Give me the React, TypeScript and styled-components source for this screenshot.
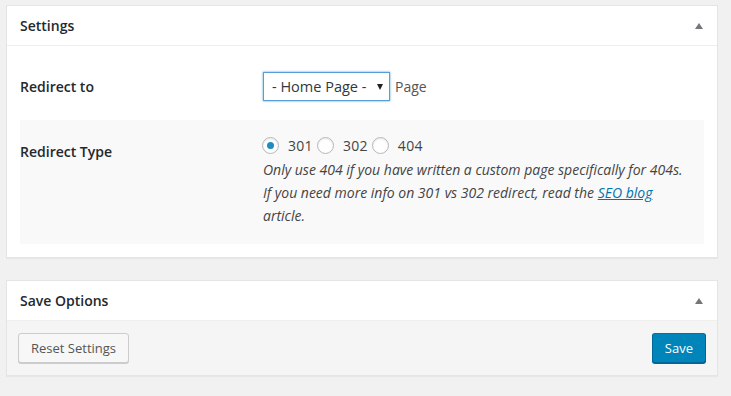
import React, { FC } from 'react';
import styled, { createGlobalStyle } from 'styled-components';

const GlobalStyle = createGlobalStyle`
  html, body {
    margin: 0;
    padding: 0;
    background: #f1f1f1;
  }
  body {
    font-family: "Open Sans", "Liberation Sans", sans-serif;
    color: #444;
    font-size: 14px;
  }
`;

const Page = styled.div`
  display: flex;
  flex-direction: column;
  gap: 22px;
  padding: 5px 13px 20px 6px;
  width: 712px;
`;

const Panel = styled.section`
  background: #fff;
  border: 1px solid #e5e5e5;
  box-shadow: 0 1px 1px rgba(0, 0, 0, 0.04);
`;

const PanelHeader = styled.header`
  display: flex;
  align-items: center;
  justify-content: space-between;
  height: 39px;
  padding: 0 14px 0 13px;
  border-bottom: 1px solid #eee;
`;

const PanelTitle = styled.h2`
  margin: 0;
  font-size: 14px;
  font-weight: 600;
  color: #23282d;
`;

const Toggle = styled.span`
  width: 0;
  height: 0;
  border-left: 4px solid transparent;
  border-right: 4px solid transparent;
  border-bottom: 6px solid #72777c;
`;

const PanelBody = styled.div`
  padding: 12px 13px 13px 13px;
`;

const Row = styled.div<{ $alt?: boolean }>`
  display: grid;
  grid-template-columns: 243px 1fr;
  align-items: ${(p) => (p.$alt ? 'start' : 'center')};
  background: ${(p) => (p.$alt ? '#f9f9f9' : 'transparent')};
  padding: ${(p) => (p.$alt ? '17px 0 17px' : '14px 0 19px')};
`;

const Label = styled.div<{ $offset?: number }>`
  font-size: 14px;
  font-weight: 600;
  color: #23282d;
  padding-top: ${(p) => p.$offset || 0}px;
`;

const Field = styled.div`
  display: flex;
  align-items: center;
  gap: 5px;
`;

const SelectBox = styled.div`
  display: flex;
  align-items: center;
  justify-content: space-between;
  box-sizing: border-box;
  width: 127px;
  height: 29px;
  padding: 0 6px 0 8px;
  border: 1px solid #5b9dd9;
  box-shadow: 0 0 2px rgba(30, 140, 190, 0.8);
  background: #fff;
  font-size: 14.5px;
  color: #32373c;
`;

const Caret = styled.span`
  width: 0;
  height: 0;
  border-left: 3.5px solid transparent;
  border-right: 3.5px solid transparent;
  border-top: 6px solid #222;
`;

const FieldText = styled.span`
  font-size: 14px;
  color: #555;
`;

const Radios = styled.div`
  display: flex;
  align-items: center;
  height: 17px;
  margin-left: -1px;
`;

const RadioOption = styled.label`
  display: flex;
  align-items: center;
  gap: 9px;
  margin-right: 4px;
  font-size: 14px;
  letter-spacing: 0.3px;
  color: #444;
`;

const RadioCircle = styled.span<{ $checked?: boolean }>`
  position: relative;
  box-sizing: border-box;
  width: 17px;
  height: 17px;
  border-radius: 50%;
  border: 1px solid #b4b9be;
  background: #fff;
  box-shadow: inset 0 1px 2px rgba(0, 0, 0, 0.1);

  &::after {
    content: '';
    display: ${(p) => (p.$checked ? 'block' : 'none')};
    position: absolute;
    left: 4px;
    top: 4px;
    width: 7px;
    height: 7px;
    border-radius: 50%;
    background: #1e8cbe;
  }
`;

const Description = styled.p`
  margin: 4px 0 0;
  font-size: 14px;
  font-style: italic;
  line-height: 23px;
  color: #444;
`;

const Link = styled.a`
  color: #0073aa;
  text-decoration: underline;
`;

const Footer = styled.div`
  display: flex;
  justify-content: space-between;
  align-items: center;
  padding: 12px 11px;
  background: #f5f5f5;
`;

const Button = styled.button<{ $primary?: boolean }>`
  box-sizing: border-box;
  height: 30px;
  padding: 0 12px;
  border-radius: 3px;
  font-family: inherit;
  font-size: 13px;
  border: 1px solid;
  border-color: ${(p) => (p.$primary ? '#0073aa #006799 #006799' : '#ccc')};
  background: ${(p) => (p.$primary ? '#0085ba' : '#f7f7f7')};
  color: ${(p) => (p.$primary ? '#fff' : '#555')};
  box-shadow: ${(p) => (p.$primary ? '0 1px 0 #006799' : '0 1px 0 #ccc')};
`;

const radioValues = ['301', '302', '404'];

const App: FC = () => (
  <>
    <GlobalStyle />
    <Page>
      <Panel>
        <PanelHeader>
          <PanelTitle>Settings</PanelTitle>
          <Toggle />
        </PanelHeader>
        <PanelBody>
          <Row>
            <Label>Redirect to</Label>
            <Field>
              <SelectBox>
                - Home Page -
                <Caret />
              </SelectBox>
              <FieldText>Page</FieldText>
            </Field>
          </Row>
          <Row $alt>
            <Label $offset={5}>Redirect Type</Label>
            <div>
              <Radios>
                {radioValues.map((v, i) => (
                  <RadioOption key={v}>
                    <RadioCircle $checked={i === 0} />
                    {v}
                  </RadioOption>
                ))}
              </Radios>
              <Description>
                Only use 404 if you have written a custom page specifically for 404s.
                <br />
                If you need more info on 301 vs 302 redirect, read the{' '}
                <Link href="#">SEO blog</Link>
                <br />
                article.
              </Description>
            </div>
          </Row>
        </PanelBody>
      </Panel>
      <Panel>
        <PanelHeader>
          <PanelTitle>Save Options</PanelTitle>
          <Toggle />
        </PanelHeader>
        <Footer>
          <Button>Reset Settings</Button>
          <Button $primary>Save</Button>
        </Footer>
      </Panel>
    </Page>
  </>
);

export default App;
